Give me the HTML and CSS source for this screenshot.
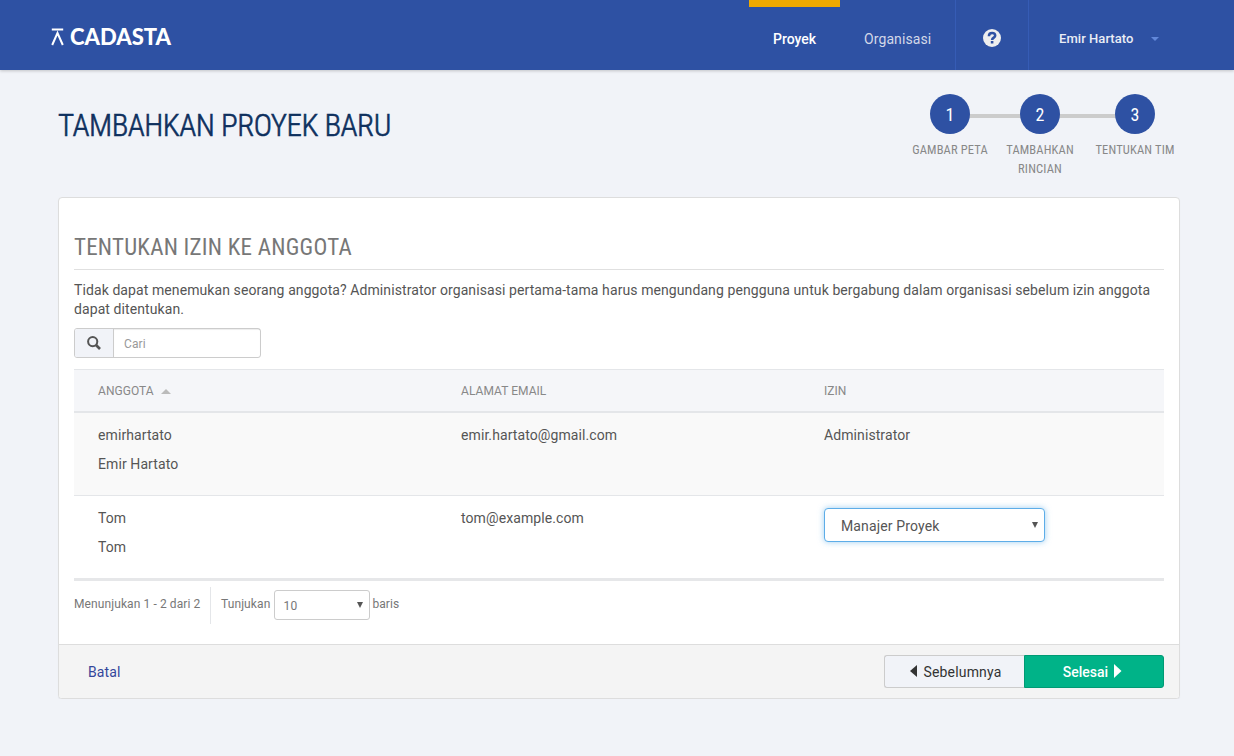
FILE: index.html
```
<!DOCTYPE html>
<html lang="id">
<head>
<meta charset="utf-8">
<title>Cadasta</title>
<link rel="stylesheet" href="styles.css">
</head>
<body>
<header class="topbar">
  <a class="logo">
    <svg width="126" height="32" viewBox="0 0 126 32">
      <path d="M1.8 7.6H13.2M2.2 23L7.5 11L12.8 23" fill="none" stroke="#fff" stroke-width="2"/>
      <text class="logo-text" x="20" y="23.4" textLength="101" lengthAdjust="spacingAndGlyphs">CADASTA</text>
    </svg>
  </a>
  <nav class="nav">
    <a class="nav-item active">Proyek</a>
    <a class="nav-item">Organisasi</a>
    <a class="nav-help">
      <svg width="18" height="18" viewBox="0 0 18 18">
        <circle cx="9" cy="9" r="9" fill="#eee"/>
        <path d="M5.9 7.2C5.9 5 7.3 4.1 9.1 4.1C11 4.1 12.2 5.1 12.2 6.7C12.2 8.6 9.1 8.7 9.1 11" fill="none" stroke="#2e51a3" stroke-width="2.5"/>
        <rect x="7.8" y="12" width="2.6" height="2.5" fill="#2e51a3"/>
      </svg>
    </a>
    <a class="nav-user">Emir Hartato<i class="caret"></i></a>
  </nav>
</header>
<main class="page">
  <div class="page-head">
    <h1 class="title"><span>TAMBAHKAN PROYEK BARU</span></h1>
    <ol class="steps">
      <li class="step"><b class="dot">1</b><span class="step-label">GAMBAR PETA</span></li>
      <li class="step"><b class="dot">2</b><span class="step-label">TAMBAHKAN<br>RINCIAN</span></li>
      <li class="step"><b class="dot">3</b><span class="step-label">TENTUKAN TIM</span></li>
    </ol>
  </div>
  <section class="panel">
    <div class="panel-body">
      <h2 class="subtitle">TENTUKAN IZIN KE ANGGOTA</h2>
      <p class="intro">Tidak dapat menemukan seorang anggota? Administrator organisasi pertama-tama harus mengundang pengguna untuk bergabung dalam organisasi sebelum izin anggota dapat ditentukan.</p>
      <div class="search">
        <span class="search-icon">
          <svg width="14" height="14" viewBox="0 0 14 14"><circle cx="5.7" cy="5.6" r="4.6" fill="none" stroke="#555" stroke-width="2"/><path d="M9 9L13 13" stroke="#555" stroke-width="2.6"/></svg>
        </span>
        <span class="search-field">Cari</span>
      </div>
      <div class="table">
        <div class="row head"><div>ANGGOTA<i class="sort"></i></div><div>ALAMAT EMAIL</div><div>IZIN</div></div>
        <div class="row odd"><div><p>emirhartato</p><p>Emir Hartato</p></div><div>emir.hartato@gmail.com</div><div>Administrator</div></div>
        <div class="row"><div><p>Tom</p><p>Tom</p></div><div>tom@example.com</div><div><span class="select role">Manajer Proyek<i class="arrow"></i></span></div></div>
      </div>
      <div class="table-foot">
        <span class="info">Menunjukan 1 - 2 dari 2</span>
        <span class="length">Tunjukan <span class="select count">10<i class="arrow"></i></span> baris</span>
      </div>
    </div>
    <footer class="panel-foot">
      <a class="cancel">Batal</a>
      <div class="buttons">
        <a class="btn prev"><svg width="7" height="12" viewBox="0 0 7 12"><path d="M7 0V12L0 6Z" fill="#333"/></svg>Sebelumnya</a>
        <a class="btn next">Selesai<svg width="8" height="14" viewBox="0 0 8 14"><path d="M0 0V14L7.5 7Z" fill="#fff"/></svg></a>
      </div>
    </footer>
  </section>
</main>
</body>
</html>
```
FILE: styles.css
```
* { box-sizing: border-box; }
body { margin: 0; background: #f1f3f8; color: #555; font: 14px/19px Roboto, sans-serif; letter-spacing: .09px; }
h1, h2, p, ol { margin: 0; padding: 0; font-weight: 400; }
.topbar { height: 70px; background: #2e51a3; display: flex; justify-content: space-between; padding-left: 50px; box-shadow: 0 1px 3px rgba(0,0,0,.2); }
.logo { display: flex; padding-top: 22px; }
.logo-text { font: 900 22px/26px Lato, sans-serif; fill: #fff; letter-spacing: 0; }
.nav { display: flex; width: 485px; line-height: 20px; color: #d3d8e8; }
.nav-item { width: 91px; padding: 29px 0 0 24px; }
.nav-item + .nav-item { width: 115px; }
.nav-item.active { color: #fff; font-weight: 500; border-top: 7px solid #efa900; padding-top: 22px; letter-spacing: 0; }
.nav-help { width: 73px; border-left: 1px solid #365cb5; padding: 29px 0 0 27px; }
.nav-user { flex: 1; border-left: 1px solid #365cb5; padding: 29px 0 0 30px; font-size: 13px; font-weight: 500; color: #eaedf5; letter-spacing: .05px; }
.caret { display: inline-block; border: 4px solid transparent; border-top-color: #6288da; border-bottom: 0; margin-left: 18px; vertical-align: 2px; }
.page { padding: 0 54px 0 58px; }
.page-head { height: 127px; padding-top: 24px; display: flex; justify-content: space-between; }
.title { font: 300 31px/40px "Roboto Condensed", Roboto, sans-serif; color: #0e305e; -webkit-text-stroke: .6px #0e305e; padding-top: 12px; letter-spacing: -.5px; }
.steps { list-style: none; display: grid; grid-template-columns: 96px 84px 106px; width: 286px; height: 84px; margin-right: -8px; text-align: center; background: linear-gradient(#ccc, #ccc) no-repeat 48px 20px / 185px 4px; }
.dot { display: block; width: 40px; height: 40px; margin: 0 auto 6px; border-radius: 50%; background: #2e51a3; color: #fff; font: 400 18px/42px "Roboto Condensed", Roboto, sans-serif; }
.step-label { font: 12.5px/19px "Roboto Condensed", Roboto, sans-serif; color: #888; display: block; white-space: nowrap; letter-spacing: .15px; }
.panel { border: 1px solid #ddd; border-radius: 4px; background: #fff; box-shadow: 0 1px 1px rgba(0,0,0,.05); height: 502px; display: flex; flex-direction: column; }
.panel-body { padding: 33px 15px 0; flex: 1; }
.subtitle { font: 400 23px/34px "Roboto Condensed", Roboto, sans-serif; color: #777; height: 39px; border-bottom: 1px solid #e0e0e0; letter-spacing: .23px; }
.intro { padding-top: 11px; }
.search { display: flex; width: 187px; height: 30px; margin: 9px 0 11px; border: 1px solid #ccc; border-radius: 3px; font-size: 12px; color: #999; line-height: 30px; }
.search-icon { width: 39px; border-right: 1px solid #ccc; background: #f1f3f8; display: flex; align-items: center; padding-left: 12px; border-radius: 2px 0 0 2px; }
.search-field { padding-left: 10px; flex: 1; box-shadow: inset 0 1px 1px rgba(0,0,0,.075); }
.table { border-top: 1px solid #e4e6e9; border-bottom: 3px solid #e6e7e9; }
.row { display: grid; grid-template-columns: 363px 363px 1fr; padding: 13px 24px 0; height: 82px; }
.row p { margin-bottom: 10px; }
.row.odd { background: #f9f9f9; height: 83px; border-bottom: 1px solid #e4e6e9; }
.row.head { background: #f5f6f9; height: 43px; border-bottom: 2px solid #e4e6e9; font-size: 12px; color: #888; padding-top: 12px; letter-spacing: .05px; }
.sort { display: inline-block; border: 5px solid transparent; border-bottom-color: #bbb; border-top: 0; margin-left: 7px; vertical-align: 1px; }
.select { display: inline-flex; align-items: center; justify-content: space-between; background: #fff; border: 1px solid #ccc; border-radius: 3px; }
.role { width: 221px; height: 34px; margin-top: -1px; padding: 2px 6px 0 16px; border-color: #5dade8; box-shadow: 0 0 6px rgba(93,173,232,.6); border-radius: 4px; letter-spacing: .14px; }
.arrow { border: 3.5px solid transparent; border-top: 6px solid #555; border-bottom: 0; margin-top: -3px; }
.table-foot { display: flex; font-size: 12px; color: #777; padding-top: 6px; letter-spacing: .1px; }
.info { width: 137px; height: 37px; line-height: 35px; border-right: 1px solid #e4e6e9; }
.length { display: flex; gap: 3px; padding-left: 10px; line-height: 35px; }
.count { width: 96px; height: 30px; margin: 3px -1px 0 1px; padding: 2px 6px 0 8px; letter-spacing: .5px; }
.panel-foot { height: 54px; border-top: 1px solid #ddd; background: #f4f4f4; border-radius: 0 0 3px 3px; display: flex; justify-content: space-between; padding: 10px 15px 0 29px; }
.cancel { color: #34469b; padding-top: 8px; letter-spacing: .14px; }
.buttons { display: flex; }
.btn { width: 140px; height: 33px; border: 1px solid #ccc; display: flex; align-items: center; justify-content: center; gap: 6px; padding-top: 1px; color: #333; }
.btn svg { margin-top: -2px; }
.prev { background: #f1f3f8; border-right: 0; border-radius: 3px 0 0 3px; letter-spacing: .17px; padding-left: 2px; gap: 7px; }
.next { background: #00b388; border-color: #009a74; color: #fff; font-weight: 500; border-radius: 0 3px 3px 0; letter-spacing: 0; padding-right: 3px; }
```
